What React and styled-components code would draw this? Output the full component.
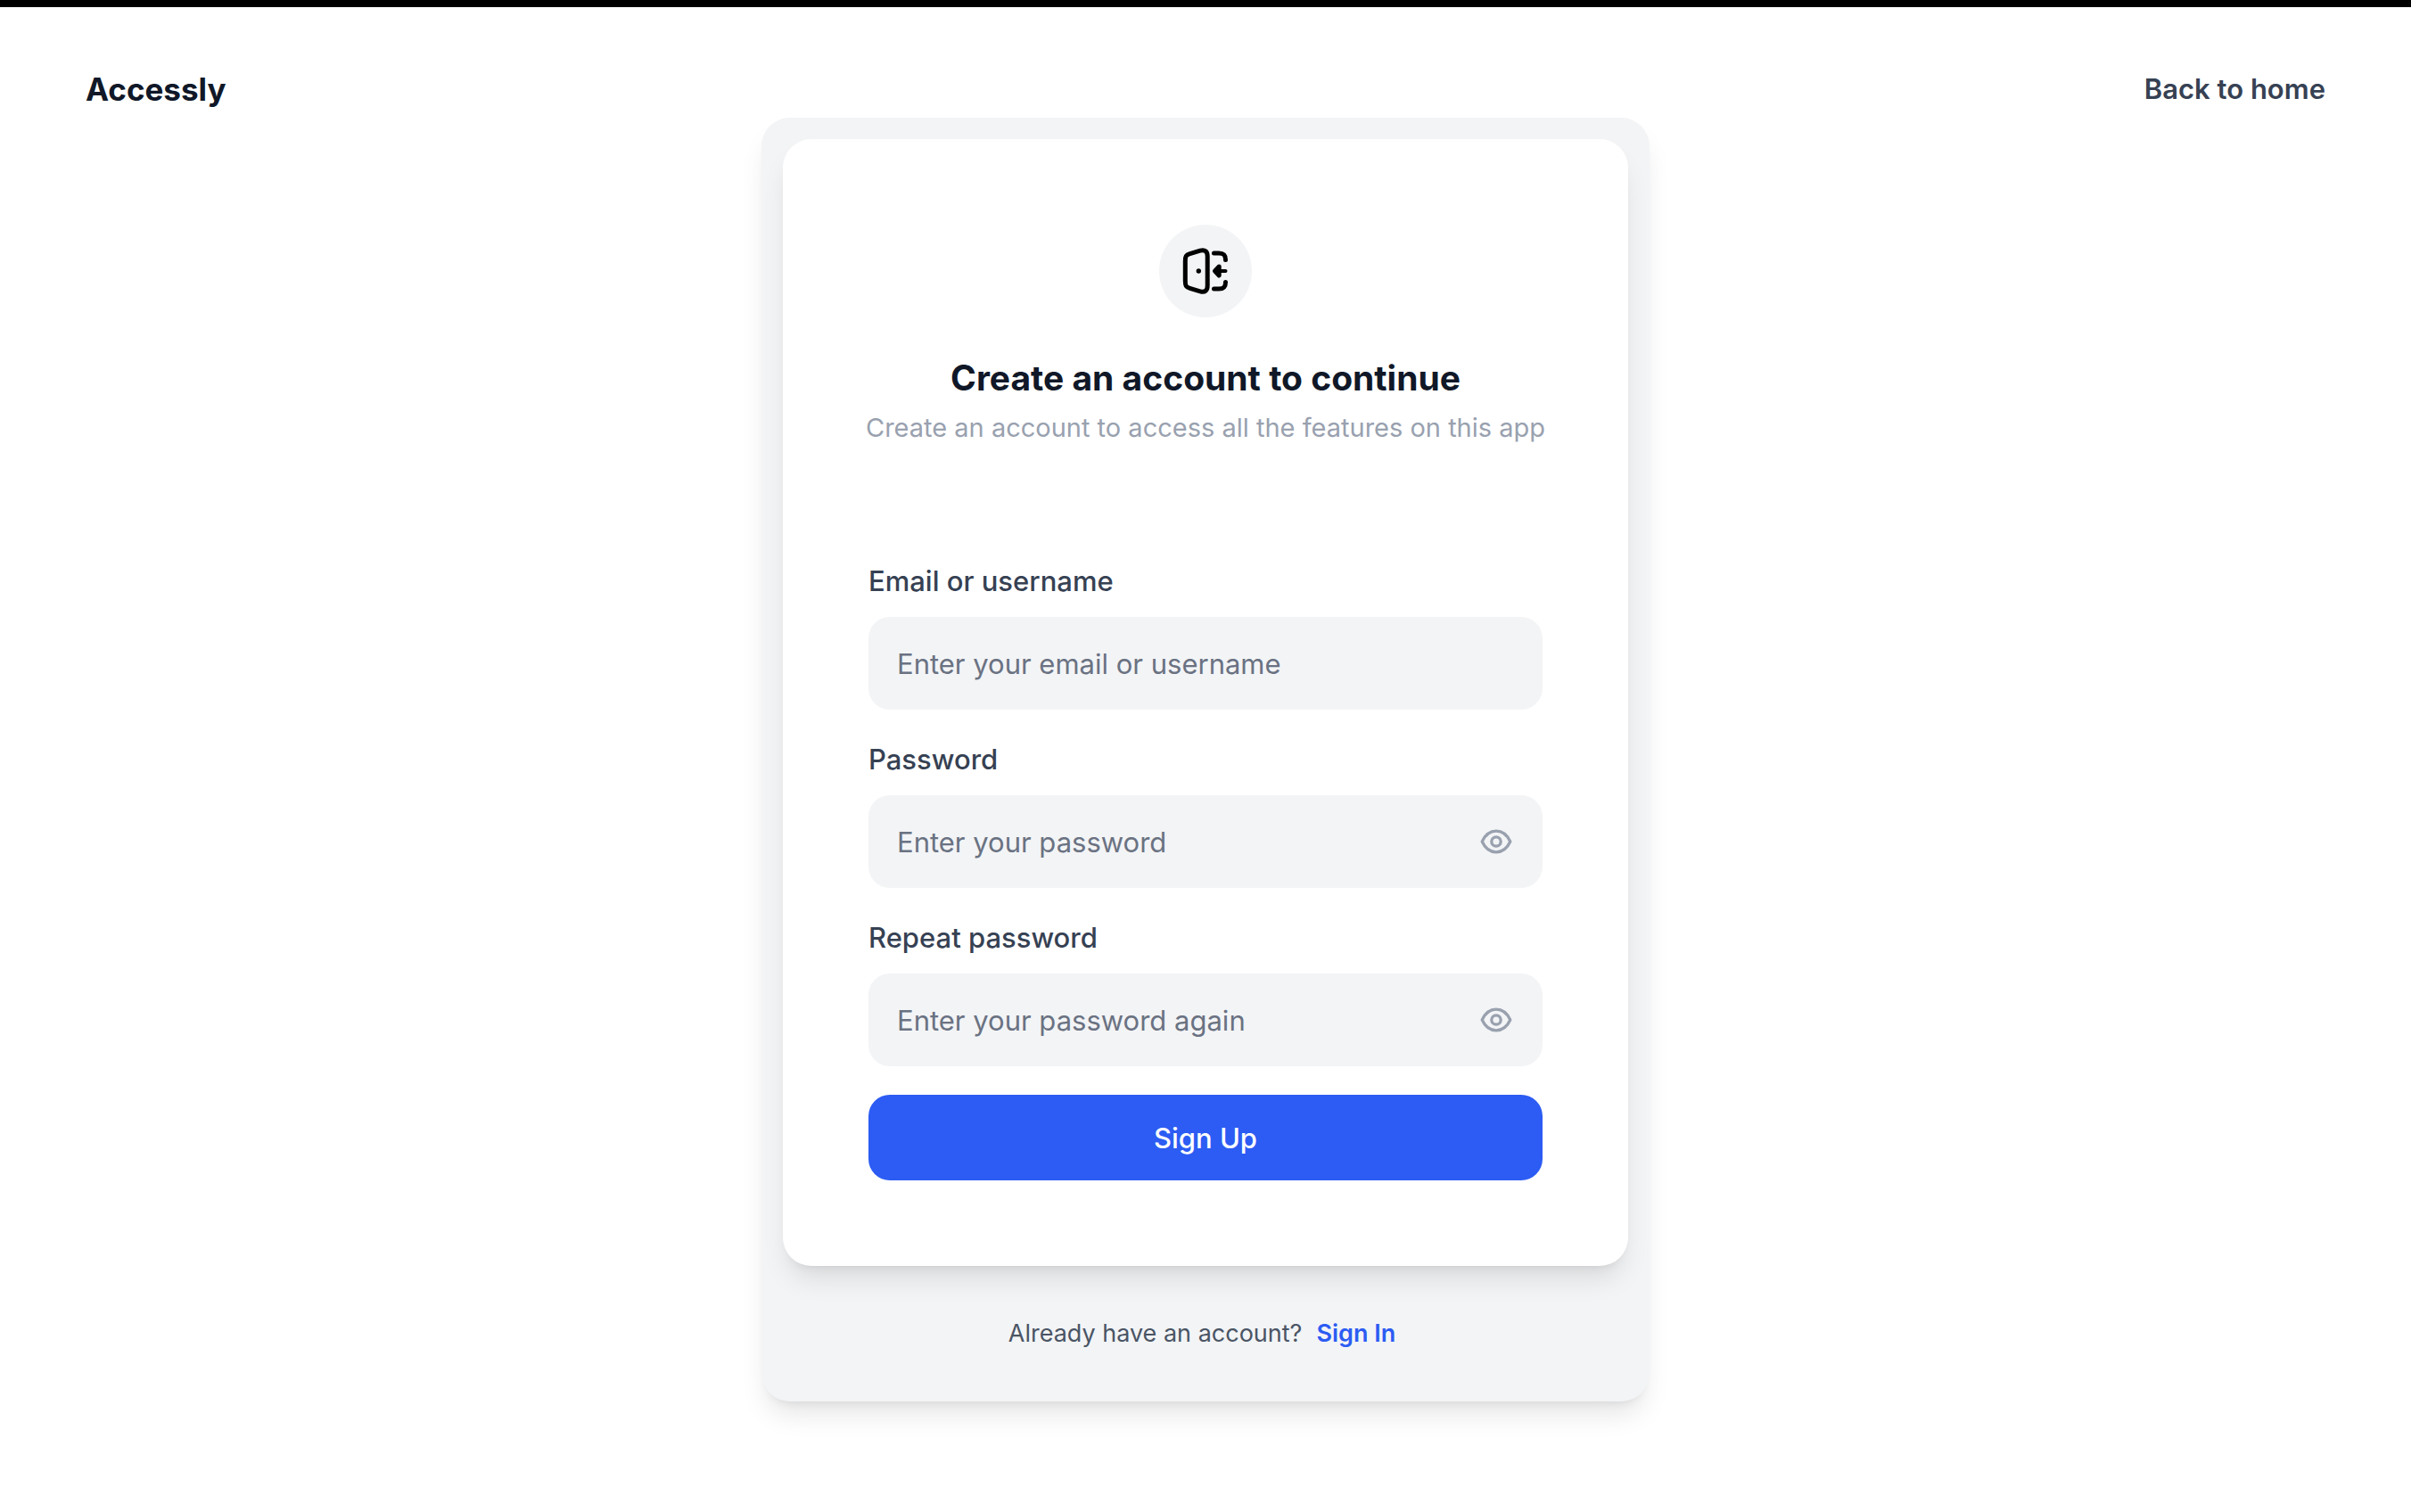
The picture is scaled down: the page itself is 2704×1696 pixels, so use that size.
import React, { useState } from "react";
import styled, { createGlobalStyle } from "styled-components";

const GlobalStyle = createGlobalStyle`
  *, *::before, *::after { box-sizing: border-box; }
  body {
    margin: 0;
    background: #ffffff;
    font-family: Inter, "Liberation Sans", sans-serif;
    -webkit-font-smoothing: antialiased;
  }
  button, input { font: inherit; }
`;

const Page = styled.div`
  min-height: 100vh;
  border-top: 8px solid #000000;
`;

const Header = styled.header`
  display: flex;
  justify-content: space-between;
  align-items: center;
  padding: 68px 96px 8px;
  line-height: 48px;
`;

const Brand = styled.a`
  color: #101828;
  font-size: 35px;
  font-weight: 700;
  text-decoration: none;
`;

const HomeLink = styled.a`
  color: #364153;
  font-size: 31px;
  font-weight: 600;
  text-decoration: none;
`;

const Main = styled.main`
  display: flex;
  justify-content: center;
`;

const Shell = styled.section`
  width: 100%;
  max-width: 996px;
  padding: 24px;
  border-radius: 32px;
  background: #f3f4f6;
  box-shadow: 0 20px 30px -6px rgba(0, 0, 0, 0.1), 0 8px 12px -8px rgba(0, 0, 0, 0.1);
`;

const Card = styled.div`
  display: flex;
  flex-direction: column;
  gap: 128px;
  padding: 96px;
  border-radius: 32px;
  background: #ffffff;
  box-shadow: 0 20px 30px -6px rgba(0, 0, 0, 0.1), 0 8px 12px -8px rgba(0, 0, 0, 0.1);
`;

const Intro = styled.div`
  display: flex;
  flex-direction: column;
  align-items: center;
  gap: 8px;
  text-align: center;
`;

const Badge = styled.div`
  display: grid;
  place-items: center;
  width: 104px;
  height: 104px;
  margin-bottom: 32px;
  border-radius: 50%;
  background: #f3f4f6;
  color: #000000;
`;

const Title = styled.h1`
  margin: 0;
  color: #101828;
  font-size: 39px;
  font-weight: 700;
  line-height: 56px;
`;

const Subtitle = styled.p`
  margin: 0;
  color: #99a1af;
  font-size: 29px;
  line-height: 40px;
  white-space: nowrap;
`;

const Form = styled.form`
  display: flex;
  flex-direction: column;
  gap: 32px;
`;

const Field = styled.div`
  display: flex;
  flex-direction: column;
  gap: 16px;
`;

const Label = styled.label`
  color: #364153;
  font-size: 31px;
  font-weight: 500;
  line-height: 48px;
`;

const Control = styled.div`
  display: flex;
  align-items: center;
  height: 104px;
  padding: 0 32px;
  border-radius: 24px;
  background: #f3f4f6;
`;

const Input = styled.input`
  flex: 1;
  min-width: 0;
  height: 100%;
  padding: 0;
  border: 0;
  outline: 0;
  background: transparent;
  color: #101828;
  font-size: 31px;
  &::placeholder { color: #6a7282; opacity: 1; }
`;

const Toggle = styled.button`
  display: grid;
  place-items: center;
  padding: 0;
  border: 0;
  background: transparent;
  color: #99a1af;
  cursor: pointer;
`;

const Submit = styled.button`
  height: 96px;
  border: 0;
  border-radius: 24px;
  background: #2c5cf3;
  color: #ffffff;
  font-size: 31px;
  font-weight: 500;
  cursor: pointer;
`;

const Footer = styled.p`
  display: flex;
  justify-content: center;
  gap: 8px;
  margin: 0;
  padding: 56px 0 32px;
  color: #4a5565;
  font-size: 27px;
  line-height: 40px;
`;

const SignInLink = styled.a`
  padding: 0 8px;
  color: #2c5cf3;
  font-weight: 600;
  text-decoration: none;
`;

function DoorIcon() {
  return (
    <svg width="64" height="64" viewBox="0 0 64 64" fill="none" stroke="currentColor" strokeWidth="5" strokeLinecap="round" strokeLinejoin="round" aria-hidden="true">
      <path d="M9.3 21C9.3 15.500 10 14 14.500 12.600L26 9.200C31.500 7.700 34.200 10 34.200 15.500V48.500C34.200 54 31.500 56.300 26 54.800L14.500 51.400C10 50 9.300 48.500 9.300 43Z" />
      <path d="M41.500 12H47C52.500 12 54.500 14 54.500 19.500M41.500 52H47C52.500 52 54.500 50 54.500 44.500" />
      <path d="M44 32H54.500" strokeWidth="4" />
      <path d="M47.200 27L42.500 32L47.200 37Z" fill="currentColor" />
      <circle cx="24.300" cy="32" r="2.700" fill="currentColor" stroke="none" />
    </svg>
  );
}

function EyeIcon() {
  return (
    <svg width="40" height="40" viewBox="0 0 40 40" fill="none" stroke="currentColor" strokeWidth="3.3" strokeLinecap="round" strokeLinejoin="round" aria-hidden="true">
      <path d="M4.200 20C7 14 12.500 8.200 20 8.200S33 14 35.800 20C33 26 27.500 31.800 20 31.800S7 26 4.200 20Z" />
      <circle cx="20" cy="20" r="5.200" />
    </svg>
  );
}

function PasswordField({ id, label, placeholder }) {
  const [visible, setVisible] = useState(false);
  return (
    <Field>
      <Label htmlFor={id}>{label}</Label>
      <Control>
        <Input id={id} type={visible ? "text" : "password"} placeholder={placeholder} />
        <Toggle type="button" aria-label={visible ? "Hide password" : "Show password"} onClick={() => setVisible(!visible)}>
          <EyeIcon />
        </Toggle>
      </Control>
    </Field>
  );
}

export default function App() {
  return (
    <Page>
      <GlobalStyle />
      <Header>
        <Brand href="#">Accessly</Brand>
        <HomeLink href="#">Back to home</HomeLink>
      </Header>
      <Main>
        <Shell>
          <Card>
            <Intro>
              <Badge><DoorIcon /></Badge>
              <Title>Create an account to continue</Title>
              <Subtitle>Create an account to access all the features on this app</Subtitle>
            </Intro>
            <Form onSubmit={(event) => event.preventDefault()}>
              <Field>
                <Label htmlFor="email">Email or username</Label>
                <Control>
                  <Input id="email" type="text" placeholder="Enter your email or username" />
                </Control>
              </Field>
              <PasswordField id="password" label="Password" placeholder="Enter your password" />
              <PasswordField id="repeat-password" label="Repeat password" placeholder="Enter your password again" />
              <Submit type="submit">Sign Up</Submit>
            </Form>
          </Card>
          <Footer>
            Already have an account?
            <SignInLink href="#">Sign In</SignInLink>
          </Footer>
        </Shell>
      </Main>
    </Page>
  );
}
